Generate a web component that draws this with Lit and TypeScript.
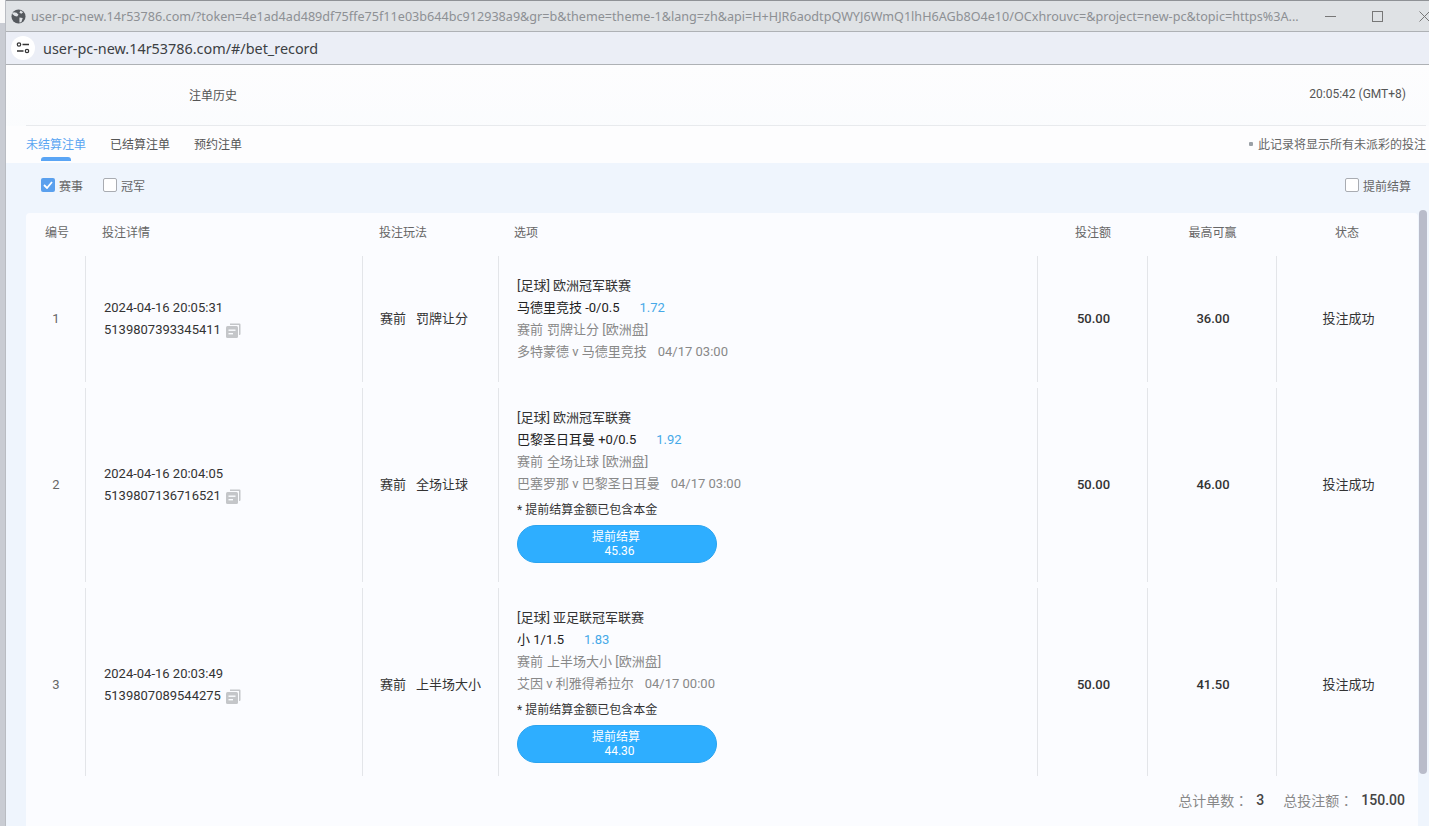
import { LitElement, html, css, svg } from "lit";
import { customElement } from "lit/decorators.js";

interface Row { n: number; time: string; id: string; kind: string; league: string; pick: string; odds: string; mA: string; mB: string; teams: string; date: string; stake: string; win: string; cash?: string; }

const rows: Row[] = [
  { n: 1, time: "2024-04-16 20:05:31", id: "5139807393345411", kind: "罚牌让分", league: "[足球] 欧洲冠军联赛", pick: "马德里竞技 -0/0.5", odds: "1.72", mA: "赛前", mB: "罚牌让分 [欧洲盘]", teams: "多特蒙德 v 马德里竞技", date: "04/17 03:00", stake: "50.00", win: "36.00" },
  { n: 2, time: "2024-04-16 20:04:05", id: "5139807136716521", kind: "全场让球", league: "[足球] 欧洲冠军联赛", pick: "巴黎圣日耳曼 +0/0.5", odds: "1.92", mA: "赛前", mB: "全场让球 [欧洲盘]", teams: "巴塞罗那 v 巴黎圣日耳曼", date: "04/17 03:00", stake: "50.00", win: "46.00", cash: "45.36" },
  { n: 3, time: "2024-04-16 20:03:49", id: "5139807089544275", kind: "上半场大小", league: "[足球] 亚足联冠军联赛", pick: "小 1/1.5", odds: "1.83", mA: "赛前", mB: "上半场大小 [欧洲盘]", teams: "艾因 v 利雅得希拉尔", date: "04/17 00:00", stake: "50.00", win: "41.50", cash: "44.30" },
];

const copyIcon = svg`<svg class="copy" viewBox="0 0 15 15" width="15" height="15"><path d="M4 .5h9.500a1 1 0 0 1 1 1V11a1 1 0 0 1-1 1H13V2H4z" fill="#c4c6c9"/><rect x="0" y="3" width="12" height="12" rx="1.500" fill="#c4c6c9"/><rect x="2.500" y="6.500" width="7" height="1.400" fill="#fbfcff"/><rect x="2.500" y="10" width="4.500" height="1.400" fill="#fbfcff"/></svg>`;

@customElement("app-root")
export class AppRoot extends LitElement {
  static styles = css`
    :host { display: block; width: 1429px; height: 826px; overflow: hidden; background: linear-gradient(#fafafa 23px, #c9ccd3 23px); font-family: Roboto, "Noto Sans CJK SC", sans-serif; font-size: 12px; color: #333; }
    .window { height: 826px; margin-left: 5px; border-left: 1px solid #b9bcc2; display: flex; flex-direction: column; box-sizing: border-box; }
    .titlebar { height: 32px; flex: none; box-sizing: border-box; background: #dfe2e5; border-top: 1px solid #8f9296; border-bottom: 1px solid #aeb1b5; display: flex; align-items: center; padding-left: 5px; }
    .globe { flex: none; width: 15px; height: 15px; }
    .title { margin-left: 5px; width: 1270px; flex: none; font-family: "Noto Sans", sans-serif; font-size: 12.62px; color: #8d9094; white-space: nowrap; overflow: hidden; }
    .winbtns { display: flex; align-items: center; margin-left: 24px; gap: 36px; }
    .addr { height: 33px; flex: none; box-sizing: border-box; background: #ebeef6; border-bottom: 1px solid #aeb1b5; display: flex; align-items: center; padding-left: 5px; }
    .tune { width: 24px; height: 24px; border-radius: 50%; background: #fff; display: flex; align-items: center; justify-content: center; flex: none; }
    .url { margin-left: 8px; font-family: "Noto Sans", sans-serif; font-size: 14.4px; color: #3c4043; }
    .page { flex: 1; min-height: 0; display: flex; flex-direction: column; background: linear-gradient(#fdfdfe, #f9fbfd 100px); }
    .head { height: 61px; flex: none; box-sizing: border-box; margin: 0 3px 0 20px; border-bottom: 1px solid #e8eaed; display: flex; align-items: center; justify-content: space-between; padding: 0 20px 2px 163px; color: #555; }
    .tabs { height: 37px; flex: none; box-sizing: border-box; display: flex; align-items: center; justify-content: space-between; padding: 0 3px 2px 20px; color: #555; background: #fdfdfe; }
    .tablist { display: flex; gap: 24px; }
    .tab { position: relative; }
    .tab.on { color: #5aa5f2; }
    .tab.on::after { content: ""; position: absolute; left: 15px; right: 15px; bottom: -9px; height: 4px; border-radius: 3px 3px 0 0; background: #5aa5f5; }
    .note { display: flex; align-items: center; gap: 5px; color: #666; }
    .dot { width: 4px; height: 4px; background: #9aa0a6; border-radius: 1px; }
    .body { flex: 1; min-height: 0; position: relative; background: #eff5fd; padding-left: 20px; }
    .filters { height: 50px; box-sizing: border-box; display: flex; align-items: center; justify-content: space-between; padding: 0 18px 6px 15px; color: #666; }
    .group { display: flex; gap: 20px; }
    .check { display: flex; align-items: center; gap: 4px; }
    .box { width: 12px; height: 12px; border: 1px solid #a9acb2; border-radius: 2px; background: #fff; display: block; }
    .box.on { width: 14px; height: 14px; border: 0; background: #5aa0ee; display: flex; align-items: center; justify-content: center; }
    .card { width: 1392px; height: 613px; background: #fbfcff; border-radius: 4px 4px 0 0; display: flex; flex-direction: column; }
    .grid { display: grid; grid-template-columns: 59px 277px 136px 539px 110px 129px 142px; }
    .th { height: 37px; flex: none; align-items: center; color: #666; }
    .th > div { text-align: center; }
    .th > .no { padding-left: 3px; }
    .th > .l { text-align: left; padding-left: 17px; }
    .th > .l.opt-h { padding-left: 16px; }
    .th > .p { padding-left: 2px; }
    .rows { height: 526px; flex: none; overflow: hidden; }
    .row { margin-top: 6px; }
    .row > div { border-left: 1px solid #e3e5e9; display: flex; flex-direction: column; justify-content: center; align-items: center; color: #333; box-sizing: border-box; }
    .row > div:first-child { border-left: 0; color: #666; padding: 0 0 2px 1px; font-size: 13px; }
    .r1 { height: 126px; } .r2, .r3 { height: 194px; }
    .row > .detail { align-items: flex-start; padding-left: 18px; line-height: 22px; font-size: 13px; }
    .idline { display: flex; align-items: center; gap: 5px; }
    .copy { display: block; }
    .row > .kind { flex-direction: row; justify-content: flex-start; padding: 0 0 4px 17px; font-size: 13px; gap: 10px; color: #333; }
    .row > .opt { align-items: flex-start; padding-left: 18px; line-height: 22px; font-size: 13px; }
    .pick { color: #222; }
    .odds { color: #46a9e8; margin-left: 20px; }
    .grey { color: #888; }
    .mb { margin-left: 4px; }
    .date { margin-left: 11px; }
    .hint { color: #333; font-size: 12px; margin-top: 4px; }
    .cash { margin-top: 4px; width: 200px; height: 38px; box-sizing: border-box; border-radius: 19px; background: #2eaeff; border: 1px solid #2aa4f0; color: #fff; font-size: 12px; line-height: 14px; font-weight: 400; display: flex; flex-direction: column; align-items: center; justify-content: center; padding-left: 5px; }
    .cash .lbl { margin-right: 7px; }
    .row > .num { font-weight: 500; color: #333; font-size: 13px; padding: 0 0 2px 2px; }
    .row > .status { font-size: 13px; color: #333; padding: 0 0 4px 2px; }
    .foot { height: 50px; flex: none; display: flex; align-items: center; justify-content: flex-end; padding-right: 13px; color: #888; font-size: 14px; padding-bottom: 2px; box-sizing: border-box; font-family: Roboto, "Noto Sans CJK TC", sans-serif; }
    .foot b { font-weight: 500; color: #444; margin-left: 8px; margin-right: 19px; }
    .foot b:last-child { margin-right: 0; }
    .scroll { position: absolute; left: 1413px; top: 47px; width: 8px; height: 564px; border-radius: 4px; background: #b9bcca; }
  `;

  private renderRow(r: Row) {
    return html`<div class="grid row r${r.n}">
      <div>${r.n}</div>
      <div class="detail"><span>${r.time}</span><span class="idline">${r.id}${copyIcon}</span></div>
      <div class="kind"><span>赛前</span><span>${r.kind}</span></div>
      <div class="opt">
        <span>${r.league}</span>
        <span class="pick">${r.pick}<span class="odds">${r.odds}</span></span>
        <span class="grey">${r.mA}<span class="mb">${r.mB}</span></span>
        <span class="grey">${r.teams}<span class="date">${r.date}</span></span>
        ${r.cash ? html`<span class="hint">* 提前结算金额已包含本金</span><div class="cash"><span class="lbl">提前结算</span><span>${r.cash}</span></div>` : ""}
      </div>
      <div class="num">${r.stake}</div>
      <div class="num">${r.win}</div>
      <div class="status">投注成功</div>
    </div>`;
  }

  render() {
    return html`<div class="window">
      <div class="titlebar">
        <svg class="globe" viewBox="0 0 16 16"><circle cx="8" cy="8" r="7.500" fill="#55595e"/><path d="M3 3.500l3 .5 2 2-1.500 2-2.500-.5L1 5zM9 9l3.500.5L11 14l-2 .5zM10 1.500l3 2-2 1.500-2-1z" fill="#dfe2e5"/></svg>
        <div class="title">user-pc-new.14r53786.com/?token=4e1ad4ad489df75ffe75f11e03b644bc912938a9&amp;gr=b&amp;theme=theme-1&amp;lang=zh&amp;api=H+HJR6aodtpQWYJ6WmQ1lhH6AGb8O4e10/OCxhrouvc=&amp;project=new-pc&amp;topic=https%3A...</div>
        <div class="winbtns">
          <svg width="11" height="11" viewBox="0 0 11 11"><path d="M0 5.500h11" stroke="#777" fill="none"/></svg>
          <svg width="11" height="11" viewBox="0 0 11 11"><rect x=".5" y=".5" width="10" height="10" stroke="#777" fill="none"/></svg>
          <svg width="11" height="11" viewBox="0 0 11 11"><path d="M.5.500l10 10M10.500.500l-10 10" stroke="#777" fill="none"/></svg>
        </div>
      </div>
      <div class="addr">
        <span class="tune"><svg width="14" height="12" viewBox="0 0 14 12"><circle cx="3" cy="2.500" r="1.700" fill="none" stroke="#333" stroke-width="1.200"/><path d="M6.500 2.500H13M1 9h6.500" stroke="#333" stroke-width="1.300" fill="none"/><circle cx="11" cy="9" r="1.700" fill="none" stroke="#333" stroke-width="1.200"/></svg></span>
        <span class="url">user-pc-new.14r53786.com/#/bet_record</span>
      </div>
      <div class="page">
        <div class="head"><span>注单历史</span><span>20:05:42 (GMT+8)</span></div>
        <div class="tabs">
          <div class="tablist"><span class="tab on">未结算注单</span><span class="tab">已结算注单</span><span class="tab">预约注单</span></div>
          <div class="note"><span class="dot"></span><span>此记录将显示所有未派彩的投注</span></div>
        </div>
        <div class="body">
          <div class="filters">
            <div class="group">
              <label class="check"><span class="box on"><svg width="10" height="8" viewBox="0 0 10 8"><path d="M1 4l3 3 5-6" stroke="#fff" stroke-width="1.800" fill="none"/></svg></span>赛事</label>
              <label class="check"><span class="box"></span>冠军</label>
            </div>
            <label class="check"><span class="box"></span>提前结算</label>
          </div>
          <div class="card">
            <div class="grid th"><div class="no">编号</div><div class="l">投注详情</div><div class="l">投注玩法</div><div class="l opt-h">选项</div><div class="p">投注额</div><div class="p">最高可赢</div><div>状态</div></div>
            <div class="rows">${rows.map((r) => this.renderRow(r))}</div>
            <div class="foot"><span>总计单数：</span><b>3</b><span>总投注额：</span><b>150.00</b></div>
          </div>
          <div class="scroll"></div>
        </div>
      </div>
    </div>`;
  }
}
